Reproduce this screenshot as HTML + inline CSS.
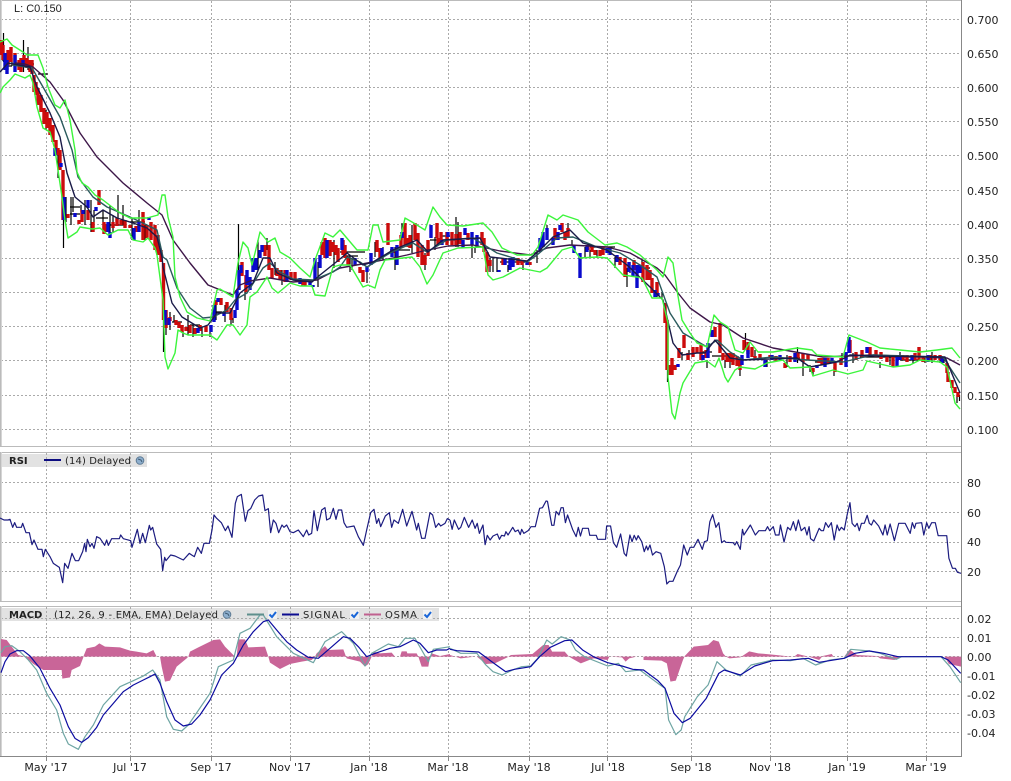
<!DOCTYPE html>
<html><head><meta charset="utf-8"><title>Chart</title>
<style>
html,body{margin:0;padding:0;background:#fff;width:1011px;height:781px;overflow:hidden}
svg{display:block}
text{font-family:"DejaVu Sans",sans-serif;font-size:11px;fill:#222}
.l text{font-size:10px;fill:#222}
.g{fill:none;stroke:#aaa;stroke-width:1;stroke-dasharray:2 2}
.c{fill:none;stroke-linejoin:round}
.n{vector-effect:non-scaling-stroke}
</style></head><body>
<svg width="1011" height="781" viewBox="0 0 1011 781" xmlns="http://www.w3.org/2000/svg">
<rect width="1011" height="781" fill="#fff"/>

<!-- legend boxes -->
<rect x="2" y="454" width="145" height="13" fill="#e2e2e2"/>
<rect x="2" y="608" width="437" height="13" fill="#e2e2e2"/>

<!-- grid -->
<path class="g" d="M1 19.5H961M1 53.5H961M1 87.5H961M1 121.5H961M1 155.5H961M1 190.5H961M1 224.5H961M1 258.5H961M1 292.5H961M1 326.5H961M1 360.5H961M1 395.5H961M1 429.5H961
M1 482.5H961M1 512.5H961M1 542.5H961M1 571.5H961
M1 618.5H961M1 637.5H961M1 656.5H961M1 675.5H961M1 694.5H961M1 713.5H961M1 732.5H961"/>
<path class="g" d="M46.5 1V446M130.5 1V446M211.5 1V446M290.5 1V446M369.5 1V446M448.5 1V446M529.5 1V446M607.5 1V446M691.5 1V446M770.5 1V446M847.5 1V446M926.5 1V446
M46.5 453V601M130.5 453V601M211.5 453V601M290.5 453V601M369.5 453V601M448.5 453V601M529.5 453V601M607.5 453V601M691.5 453V601M770.5 453V601M847.5 453V601M926.5 453V601
M46.5 607V756M130.5 607V756M211.5 607V756M290.5 607V756M369.5 607V756M448.5 607V756M529.5 607V756M607.5 607V756M691.5 607V756M770.5 607V756M847.5 607V756M926.5 607V756"/>
<path d="M46.5 756V761M130.5 756V761M211.5 756V761M290.5 756V761M369.5 756V761M448.5 756V761M529.5 756V761M607.5 756V761M691.5 756V761M770.5 756V761M847.5 756V761M926.5 756V761" stroke="#888" fill="none"/>

<!-- frames -->
<path d="M0.5 0V446M0.5 452V601M0.5 606V756M0 0.5H961M0 446.5H961M0 452.5H961M0 601.5H961M0 606.5H961" stroke="#bbb" stroke-width="1" fill="none"/>
<path d="M1.5 0V446M1.5 452V601M1.5 606V756" stroke="#d5d5d5" fill="none"/>
<path d="M0 756.5H961" stroke="#888" fill="none"/>
<path d="M961.5 0V757" stroke="#888" fill="none"/>

<!-- wicks -->
<path fill="none" stroke="#000" stroke-width="1.2" d="M3.5 33V62M8 55V70M12 58V66M23.5 40V72M28 47V70M40 95V110M46 110V130M50 122V130M58 155V178M63.5 197V248M66 197V222M71 197V225M73 197V212M81 205V212M85 200V225M91 200V232M94 210V230M103 210V230M110 205V235M113 215V232M118 195V225M123 205V225M132 218V240M139 210V225M145 225V240M152 228V238
M163.5 320V352M166 315V335M170 312V330M174 315V322M183 325V337M188 315V335M193 325V337M202 327V337M210 325V337M216 300V320M225 305V322M231 310V325M233 318V323M238.5 224V290M245 285V300M258 240V270M267 238V250M275 262V275M282 270V285M302 280V286M318 262V287M334 240V268M350 255V272
M352 258V270M367 267V283M375 242V257M383 247V260M395 247V270M402 223V240M412 225V253M425 253V270M435 237V250M456 217V247M458 222V247M472 232V258M475 247V253M490 258V272M493 258V272M497 258V272M508 265V272M523 262V270M537 250V263M547 225V235M568 223V228M572 240V245M585 247V258M590 250V258M597 250V258M615 257V268M627 268V287M630 262V273M642 260V273M657 287V297M662 292V298
M667.5 370V382M682 352V360M689 350V360M707 360V368M725 360V368M730 360V368M740 365V376M745.5 333V350M755 350V360M767 360V367M787 355V367M797.5 347V363M803 360V376M810 365V372M813 368V376M834 367V376M842 353V363M853 353V363M880 362V368M890 355V365M900 352V360M913 355V363M925 358V363M932 352V363M940 357V363M944 357V363M957 395V403M959.5 395V401
M2 60H8M4 66H12M20 64H34M38 74H48M70 207H80M70 214H80M96 218H108M110 225H125M130 222H145M172 322H182M190 325H200M212 312H222M340 252H365M345 256H358M390 250H410M430 240H460M440 236H450M500 262H525M590 247H615M640 268H650M700 352H712M712 356H735M770 358H800M815 362H835M860 357H915M900 360H925"/>

<!-- red bodies -->
<path fill="none" stroke="#cc0c0c" stroke-width="3.4" d="M1.5 40V55M11 47V62M15 53V63M19 60V70M27 58V68M32 60V74M34 75V92M36 82V95M41 95V112M44 108V124M53 125V142M58 148V155M63 170V220M68 214V218M79 220V224M82 210V222M88 210V220M93 222V232M99 190V205M104 222V234M107 224V232M121 220V225M125 220V228M130 225V228M143 212V240M147 225V238M155 225V250M158 235V255M161 250V262
M3 45V60M8 50V65M21 58V72M24 55V66M30 60V72M38 88V105M47 112V128M50 118V135M56 140V152M60 150V170M113 222V228M117 218V226M136 226V232M151 222V240
M163.5 263V320M166 310V328M170 317V321M176 320V325M179 322V328M182 325V332M190 325V333M195 328V334M206 326V332M216 300V305M221 298V305M231 308V320M242 262V276M246 275V292M265 245V256M269 245V270M272 268V278M280 270V280M285 270V282M295 272V280M303 280V285M305 280V286M325 238V258M330 240V256M336 245V255M338 248V262
M186 327V331M200 325V331M227 302V312M277 268V276M291 272V280M322 242V255M333 242V252
M343 240V255M348 258V265M360 267V273M363 270V282M377 240V252M380 248V258M388 223V245M393 250V253M405 223V245M408 238V247M415 223V240M418 233V257M422 245V265M425 255V265M437 223V238M438 238V245M447 232V245M452 232V245M468 233V240M482 232V245M484 238V252M487 252V272M503 258V265M518 258V265M530 262V265M555 228V240M562 223V232M568 228V237M588 245V250M595 250V255M603 247V255M620 257V265M625 258V277M643 262V282M650 270V280M652 278V293M665 303V323
M345 245V258M401 235V248M410 235V248M428 240V256M441 232V242M456 234V245M460 232V244M490 260V266M522 260V265M565 232V240M592 246V252M600 250V256M634 260V270M647 265V280M657 282V296
M667 320V370M670 365V375M672 358V375M675 365V370M684 335V348M688 353V360M693 347V357M697 347V353M701 345V360M715 327V337M720 323V353M723 353V360M727 353V362M733 353V365M740 360V370M744 340V350M752 347V357M755 356V360M770 355V358M785 363V368M798 353V360M803 353V362M813 368V372M822 358V365M828 358V363M835 363V372M850 340V353M870 347V355M876 350V357M887 355V362M893 357V367M907 355V362M919 347V360M923 357V362M935 355V360M947 363V373M948 372V382M952 380V388M955 387V393M958 392V397
M679 348V358M706 350V358M730 353V362M737 356V366M748 342V354M760 354V360M776 356V361M790 356V362M808 354V360M819 358V363M841 358V365M856 352V360M862 350V357M881 352V359M903 355V360M915 353V360M930 355V360M940 355V360"/>

<!-- blue bodies -->
<path fill="none" stroke="#0a0acc" stroke-width="3.4" d="M5 53V70M7 60V74M15 55V72M23 60V66M55 148V156M61 163V167M64 197V220M75 213V217M83 210V214M88 200V208M96 207V211M108 222V232M110 232V238M134 228V240M139 222V232M149 217V220
M165 310V325M169 318V325M198 328V333M211 325V332M214 305V322M218 298V302M224 312V316M235 310V318M237 290V310M239 270V290M241 265V273M247 270V285M250 277V290M253 258V272M256 258V270M260 250V258M262 245V252M287 270V282M300 278V284M310 280V285M313 285V287M315 258V280M320 255V268M327 240V258
M342 238V250M355 258V265M367 267V272M371 253V265M382 248V257M392 247V257M397 245V265M402 232V238M431 225V238M442 240V245M448 232V237M465 228V235M463 240V248M472 232V245M477 235V247M499 270V272M505 258V265M510 258V270M513 257V267M527 262V265M540 238V252M543 232V247M547 228V240M553 238V245M558 232V240M560 225V230M574 245V253M580 253V278M587 245V252M607 248V253M610 248V255M617 255V262M629 262V272M633 265V277M637 265V288M640 265V273M655 290V297M658 293V296
M678 364V367M703 355V360M708 343V358M712 330V337M742 355V365M748 350V358M765 360V367M772 355V360M780 355V360M795 353V362M817 365V368M825 358V367M832 358V363M846 352V367M849 337V353M867 347V353M897 357V367M900 355V360M912 355V360M928 355V362M942 357V363"/>

<!-- slow EMA -->
<polyline class="c" stroke="#3d1648" stroke-width="1.4" points="15,63 25,64 33,67 50,82 63,100 80,133 97,157 123,183 147,203 162,215 173,240 190,263 208,285 233,295 240,285 250,281 270,278 293,282 317,280 340,268 373,262 393,258 407,255 423,251 448,246 473,245 500,251 530,255 547,248 570,245 607,247 630,253 657,268 665,275 678,293 690,308 710,322 723,325 743,338 773,348 823,357 873,355 947,358 960,365"/>
<!-- medium EMA -->
<polyline class="c" stroke="#2a5a5c" stroke-width="1.4" points="13,65 32,68 43,87 60,117 72,150 78,177 93,197 107,207 130,217 147,225 157,230 163,257 167,260 177,288 190,308 203,318 213,317 227,310 235,300 247,293 263,268 270,263 280,272 293,279 313,280 333,272 340,267 347,257 360,262 367,267 390,253 413,243 427,252 447,240 473,238 497,253 527,262 537,255 557,238 573,237 597,247 620,253 640,265 657,277 670,313 683,333 707,347 717,340 730,352 743,360 773,357 807,360 843,362 873,355 943,357 960,383"/>
<!-- fast EMA -->
<polyline class="c" stroke="#1a1a48" stroke-width="1.4" points="0,72 8,63 30,67 37,87 50,113 60,137 67,173 75,197 87,207 93,217 103,210 117,218 133,223 147,228 157,237 162,257 163,267 172,303 182,317 200,328 208,325 217,313 230,313 240,293 253,283 263,258 270,258 277,273 293,280 312,282 320,275 340,259 347,253 363,265 373,262 393,250 417,240 428,252 443,240 480,238 490,257 527,261 540,250 553,237 570,230 583,243 607,250 627,265 650,287 663,300 673,343 682,355 697,353 705,353 715,340 730,358 743,360 797,358 810,367 837,362 850,355 873,356 945,357 960,393"/>

<!-- Bollinger upper -->
<polyline class="c" stroke="#3cf53c" stroke-width="1.4" points="0,42 7,39 12,45 23,52 27,55 38,55 43,68 48,87 55,105 60,108 65,100 70,120 75,150 77,172 82,183 88,187 95,195 103,200 112,207 120,213 130,218 147,218 158,215 162,195 165,195 168,217 173,237 175,277 180,297 187,312 197,318 210,321 217,290 220,289 233,297 238,263 243,242 248,248 252,265 255,253 260,232 268,242 275,238 280,252 290,258 300,268 310,277 315,260 325,233 333,237 340,230 357,250 368,250 373,225 378,225 383,242 400,240 405,218 412,222 425,230 433,207 440,217 447,225 463,226 483,223 492,232 502,248 517,255 532,255 538,247 548,215 557,220 563,215 578,220 588,232 605,245 617,243 627,247 640,255 657,270 663,277 668,257 673,263 677,290 682,320 690,333 697,343 707,347 714,315 720,322 728,327 735,350 743,353 750,342 758,352 773,352 797,348 812,350 817,355 843,357 849,335 867,342 880,348 900,350 920,352 937,350 952,348 960,358"/>
<!-- Bollinger lower -->
<polyline class="c" stroke="#3cf53c" stroke-width="1.4" points="0,93 3,87 10,80 15,74 25,78 30,75 33,83 37,107 43,128 50,132 55,150 58,170 62,197 65,220 68,238 77,232 80,227 92,229 100,228 108,235 118,230 128,230 133,240 143,242 148,238 155,248 157,255 163,300 165,357 168,369 175,353 178,330 183,333 188,335 210,335 217,340 227,325 233,325 240,335 247,325 250,297 257,292 267,277 272,288 278,293 290,283 300,286 312,286 315,295 325,296 333,267 340,265 350,265 363,287 368,285 375,288 380,270 385,260 412,257 420,267 427,284 433,275 443,253 458,248 483,247 488,275 493,280 503,277 520,268 540,272 547,268 562,250 572,247 580,258 597,257 607,258 623,275 637,277 642,278 652,298 662,298 668,323 668,377 672,413 675,419 680,393 683,383 695,363 707,361 715,367 719,358 725,377 728,382 735,370 740,367 755,369 767,363 783,360 790,368 810,367 813,376 833,370 848,374 863,370 867,361 893,367 910,365 920,360 940,362 947,367 955,403 960,409"/>

<!-- RSI -->
<g transform="translate(0,440) scale(.33333)">
<polyline class="c n" stroke="#1c1c80" stroke-width="1.2" points="0,234 12,240 24,240 30,238 38,262 44,248 50,262 64,262 68,250 78,278 88,278 96,314 102,300 114,328 126,328 130,350 136,328 150,350 160,370 178,382 188,428 194,370 204,385 216,340 226,362 236,362 248,335 254,310 258,335 262,298 270,320 276,310 282,325 290,290 300,295 314,316 320,300 325,316 335,296 358,296 362,285 370,296 392,302 396,322 412,268 420,310 428,280 436,308 448,256 452,270 458,262 470,312 482,328 488,392 494,352 498,362 512,345 525,348 550,360 568,340 575,345 583,350 593,322 604,340 612,310 628,310 636,270 642,225 650,235 664,248 676,272 684,258 696,292 706,190 712,170 724,163 736,244 744,212 752,206 764,180 776,168 788,165 795,212 805,206 812,278 820,240 828,250 836,278 846,255 852,262 860,255 870,275 880,278 895,270 910,290 920,270 926,285 935,280 942,212 952,272 965,210 975,203 980,240 990,235 1000,205 1008,238 1015,210 1025,210 1032,248 1040,262 1062,258 1075,290 1090,316 1100,270 1112,218 1122,208 1130,250 1136,236 1142,260 1156,228 1168,218 1175,262 1182,240 1195,250 1208,208 1220,258 1236,214 1250,270 1255,250 1265,295 1275,295 1290,218 1298,225 1307,262 1316,250 1322,258 1335,250 1342,236 1350,240"/>
</g>
<g transform="translate(450,440) scale(.3584,.33333)">
<polyline class="c n" stroke="#1c1c80" stroke-width="1.2" points="0,240 6,268 12,240 24,268 30,262 40,232 52,262 62,240 70,265 76,250 82,280 92,255 98,314 104,286 112,300 120,288 132,282 138,298 144,286 152,288 156,275 162,285 175,262 182,275 190,270 196,284 200,268 206,280 218,272 226,260 238,260 250,205 258,203 268,183 272,184 284,256 290,256 296,214 304,225 310,203 316,203 322,248 328,225 342,268 352,290 358,262 364,288 370,265 386,265 390,286 408,286 412,298 434,298 437,258 448,258 456,308 465,322 476,282 486,340 492,348 502,285 508,305 514,286 520,300 525,287 535,305 542,335 548,318 552,330 558,315 565,345 575,335 588,340 598,380 605,432 612,424 622,424 635,392 643,375 652,315 662,345 670,322 680,322 692,298 704,328 710,305 718,302 725,245 733,224 742,262 750,248 758,308 765,302 770,307 790,308 795,315 800,305 810,328 816,268 820,285 838,255 852,285 862,272 880,272 886,260 892,272 902,260 908,285 918,285 922,255 932,306 942,262 950,270 958,245 965,272 972,240 980,272 990,262 996,285 1002,260 1006,296 1015,303 1030,265 1036,272 1042,272 1048,248 1056,262 1064,248 1072,300 1080,255 1086,272 1092,262 1100,270 1108,225 1116,188 1122,250 1130,260 1136,250 1142,272 1148,250 1156,250 1164,226 1170,250 1176,255 1182,240 1196,258 1208,285 1214,255 1220,285 1228,252 1240,302 1252,250 1270,250 1284,280 1290,248 1296,265 1300,250 1316,248 1322,285 1330,248 1336,265 1344,248 1354,248 1362,287 1386,287 1392,355 1402,385 1410,385 1416,397 1426,400"/>
</g>

<!-- MACD -->
<g transform="translate(0,440) scale(.33333)">
<polygon fill="#c96598" points="3,650 3,597 20,600 35,620 55,645 75,650 100,672 130,690 185,690 187,716 210,712 215,690 240,678 250,652 250,650 260,625 285,620 298,610 315,620 360,622 390,632 410,635 440,640 460,630 470,650 480,650 485,680 495,725 510,722 530,680 560,655 565,650 570,635 595,622 640,600 660,598 675,620 705,650 710,650 715,598 735,598 745,622 795,620 805,650 810,668 840,687 870,672 905,665 935,660 945,650 950,640 975,618 985,630 1030,628 1038,650 1040,655 1080,665 1095,680 1105,672 1115,650 1120,635 1140,640 1175,638 1185,650 1200,650 1205,634 1220,634 1222,640 1250,640 1255,650 1265,680 1285,680 1290,650 1295,640 1320,648 1350,642 1350,650"/>
<polyline class="c n" stroke="#6ea5a3" stroke-width="1.2" points="3,638 15,620 35,617 60,635 85,660 110,690 140,760 170,810 190,880 205,912 235,928 255,890 280,855 310,795 360,740 400,722 430,708 458,690 480,720 500,830 520,868 545,873 565,855 630,760 655,680 700,660 720,580 750,565 780,525 790,525 830,590 880,640 940,668 975,605 1025,575 1060,610 1095,678 1115,640 1165,612 1195,620 1215,595 1245,595 1285,665 1300,628 1350,620"/>
<polyline class="c n" stroke="#0c0ca0" stroke-width="1.2" points="3,698 15,665 30,642 50,632 70,632 90,648 120,685 150,745 180,795 205,860 225,895 245,907 265,893 290,862 310,825 340,790 370,755 400,735 430,720 450,710 465,702 480,730 500,785 525,840 550,858 575,852 600,825 630,780 665,705 700,670 730,615 760,575 790,545 805,540 830,570 860,605 890,630 925,652 955,655 990,625 1030,590 1050,595 1075,620 1100,650 1120,642 1170,625 1200,620 1240,600 1260,610 1285,638 1310,630 1340,630 1350,625"/>
</g>
<g transform="translate(450,440) scale(.3584,.33333)">
<polygon fill="#c96598" points="0,650 0,645 30,655 70,650 75,650 100,672 125,670 160,652 170,645 230,642 260,615 275,615 285,635 320,635 332,650 340,655 365,670 400,655 440,660 445,650 480,652 490,665 500,655 520,650 540,650 540,660 590,662 605,670 615,725 630,722 650,660 655,648 680,620 720,615 735,600 750,605 762,640 770,650 780,655 810,652 835,634 860,640 910,645 935,648 960,650 970,642 1000,650 1030,660 1040,648 1065,642 1070,650 1100,650 1115,628 1135,645 1190,648 1200,655 1240,660 1260,650 1380,650 1392,672 1426,680 1426,650"/>
<polyline class="c n" stroke="#6ea5a3" stroke-width="1.2" points="0,625 30,640 75,640 100,675 120,695 145,705 175,690 200,680 225,678 245,655 270,600 285,612 310,590 335,600 350,630 375,650 440,678 470,670 490,695 530,690 580,730 600,745 610,840 630,884 645,870 655,830 690,770 720,735 745,665 770,690 810,708 840,675 900,660 950,662 985,655 1020,675 1060,660 1100,655 1118,628 1170,633 1200,640 1245,658 1260,650 1370,650 1395,680 1425,728"/>
<polyline class="c n" stroke="#0c0ca0" stroke-width="1.2" points="0,628 20,632 80,636 120,668 155,695 180,688 225,680 250,650 280,622 320,602 340,600 370,630 400,650 440,668 480,678 510,688 540,690 580,722 600,745 625,820 648,848 670,835 715,775 750,700 765,690 810,705 850,678 900,662 950,660 1000,655 1030,667 1100,655 1130,640 1170,633 1210,640 1250,650 1370,650 1390,660 1425,700"/>
</g>

<!-- top label -->
<text x="14" y="12" style="font-family:'Liberation Sans',sans-serif;font-size:11px">L: C0.150</text>

<!-- RSI legend -->
<g class="l">
<text x="9" y="464" style="font-weight:bold">RSI</text>
<path d="M44 460H61" stroke="#0c0c80" stroke-width="2"/>
<text x="65" y="464" textLength="66">(14) Delayed</text>
<circle cx="140" cy="460.5" r="3.8" fill="#8fb0cf" stroke="#5d7a94"/>
<path d="M138 459l3 1 1 2" stroke="#3f5a72" fill="none"/>

<text x="9" y="618" style="font-weight:bold">MACD</text>
<text x="54" y="618" textLength="164">(12, 26, 9 - EMA, EMA) Delayed</text>
<circle cx="227" cy="614.5" r="3.8" fill="#8fb0cf" stroke="#5d7a94"/>
<path d="M225 613l3 1 1 2" stroke="#3f5a72" fill="none"/>
<path d="M247 614.5H264" stroke="#5e8f8c" stroke-width="2"/>
<rect x="268" y="610" width="9" height="9" fill="#f2f2f2"/>
<path d="M269.5 614.5l2.5 2.5 4-5" stroke="#1a66d8" stroke-width="2" fill="none"/>
<path d="M282 614.5H299" stroke="#0c0c90" stroke-width="2"/>
<text x="303" y="618" textLength="42">SIGNAL</text>
<rect x="350" y="610" width="9" height="9" fill="#f2f2f2"/>
<path d="M351.5 614.5l2.5 2.5 4-5" stroke="#1a66d8" stroke-width="2" fill="none"/>
<path d="M364 614.5H381" stroke="#c0608f" stroke-width="2"/>
<text x="385" y="618" textLength="32">OSMA</text>
<rect x="423" y="610" width="9" height="9" fill="#f2f2f2"/>
<path d="M424.5 614.5l2.5 2.5 4-5" stroke="#1a66d8" stroke-width="2" fill="none"/>
</g>

<!-- right axis -->
<g>
<text x="967" y="24">0.700</text><text x="967" y="58">0.650</text><text x="967" y="92">0.600</text><text x="967" y="126">0.550</text><text x="967" y="160">0.500</text><text x="967" y="195">0.450</text><text x="967" y="229">0.400</text><text x="967" y="263">0.350</text><text x="967" y="297">0.300</text><text x="967" y="331">0.250</text><text x="967" y="365">0.200</text><text x="967" y="400">0.150</text><text x="967" y="434">0.100</text>
<text x="967" y="487">80</text><text x="967" y="517">60</text><text x="967" y="546">40</text><text x="967" y="576">20</text>
<text x="967" y="623">0.02</text><text x="967" y="642">0.01</text><text x="967" y="661">0.00</text><text x="967" y="680">-0.01</text><text x="967" y="699">-0.02</text><text x="967" y="718">-0.03</text><text x="967" y="737">-0.04</text>
</g>

<!-- bottom axis -->
<g text-anchor="middle">
<text x="46" y="771">May '17</text><text x="130" y="771">Jul '17</text><text x="211" y="771">Sep '17</text><text x="290" y="771">Nov '17</text><text x="369" y="771">Jan '18</text><text x="448" y="771">Mar '18</text><text x="529" y="771">May '18</text><text x="608" y="771">Jul '18</text><text x="691" y="771">Sep '18</text><text x="770" y="771">Nov '18</text><text x="847" y="771">Jan '19</text><text x="926" y="771">Mar '19</text>
</g>
</svg>
</body></html>
